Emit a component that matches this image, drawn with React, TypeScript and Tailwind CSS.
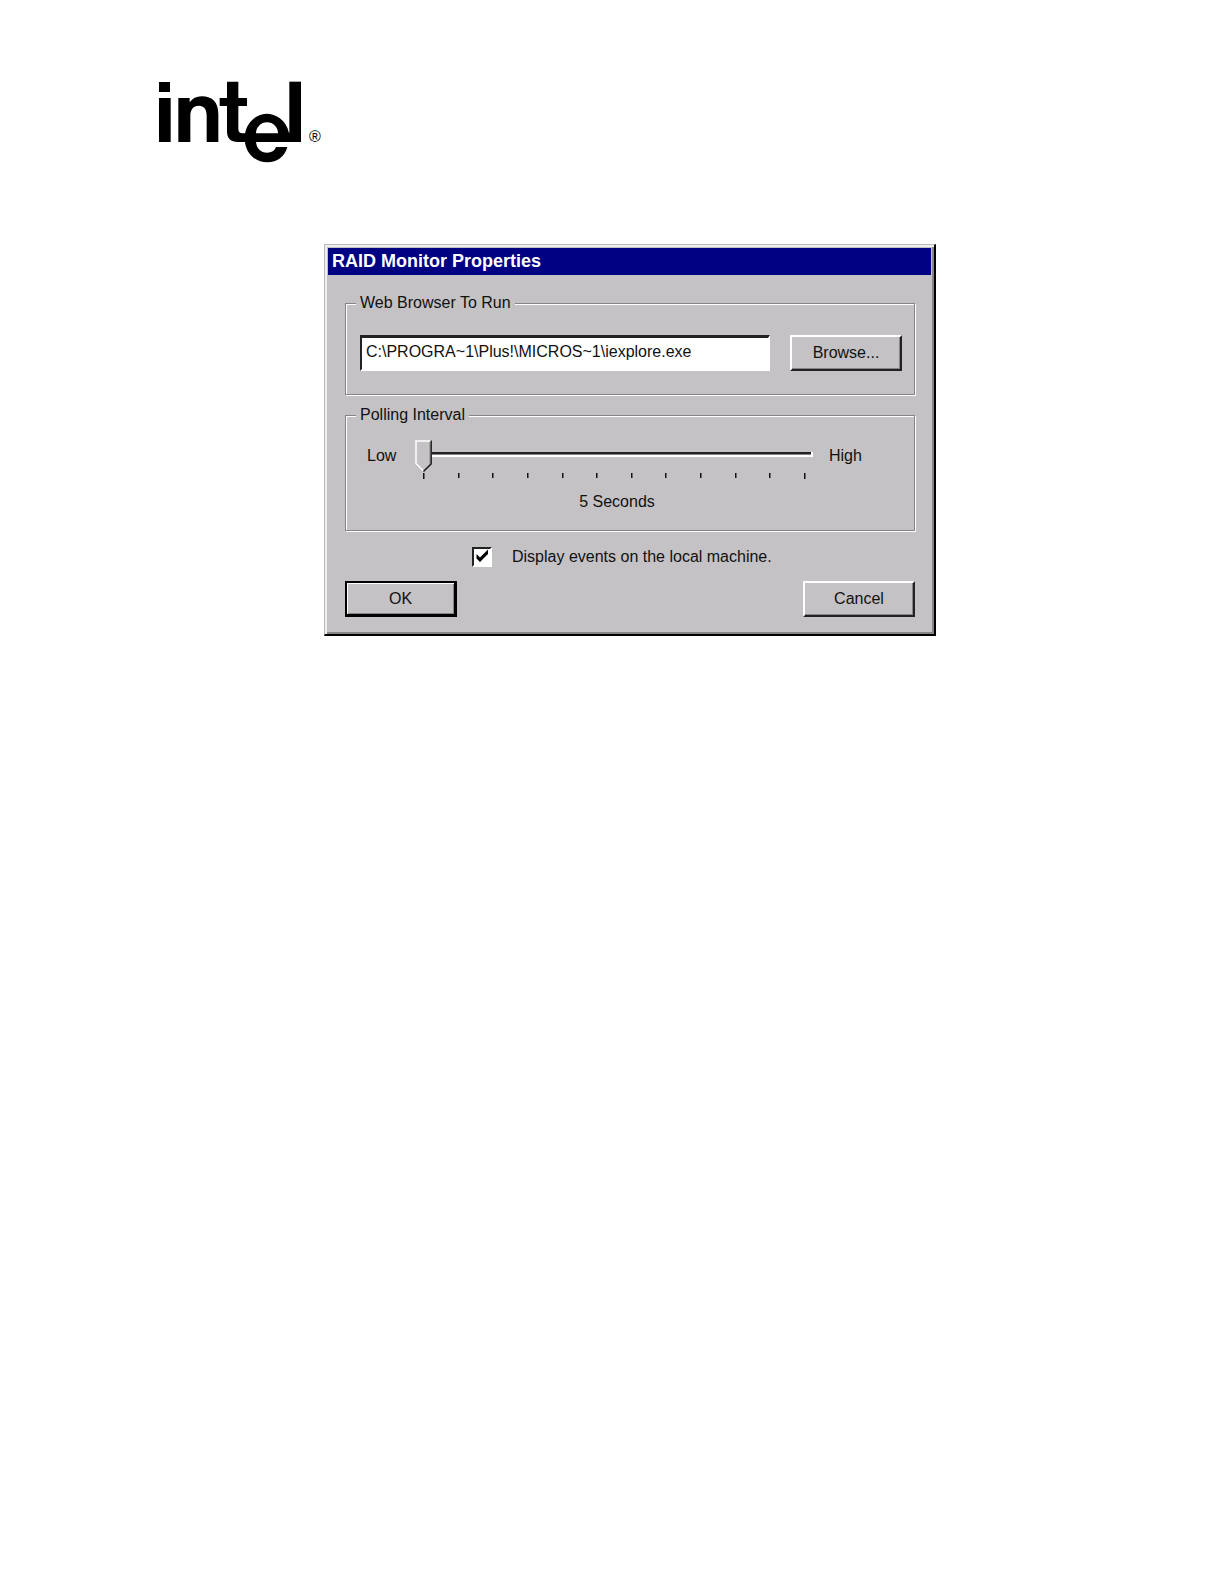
import React from 'react';

const TICKS = 12;

const IntelLogo: React.FC = () => (
    <svg viewBox="27 33 426 246" className="w-[142px] h-[82px]" role="img" aria-label="intel">
        {/* i */}
        <rect x="27" y="36" width="33" height="30" />
        <rect x="27" y="84" width="35" height="132" />
        {/* n */}
        <path d="M85 84h34v13c8-12 20-18 36-18c33 0 50 19 50 53v84h-35v-79c0-20-8-30-24-30s-25 12-25 30v79h-36z" />
        {/* t */}
        <path d="M231 35h34v49h26v24h-26v66c0 12 4 16 15 16h12l-6 26h-22c-22 0-33-10-33-32v-76h-22v-24h22z" />
        {/* e */}
        <path
            fillRule="evenodd"
            d="M284 205A67 72 0 0 1 416 186L418 190H453V216H318C320 236 332 248 352 248C364 248 374 242 378 231H412C404 260 382 277 352 277C314 277 284 248 284 205zM318 190H384A33 33 0 0 0 318 190z"
        />
        {/* l */}
        <rect x="418" y="35" width="35" height="181" />
    </svg>
);

interface GroupBoxProps {
    title: string;
    className?: string;
    children: React.ReactNode;
}

const GroupBox: React.FC<GroupBoxProps> = ({ title, className = '', children }) => (
    <fieldset
        className={`min-w-0 border border-[#868487] pr-3 pl-3.5 shadow-[1px_1px_0_#fff,inset_1px_1px_0_#fff] ${className}`}
    >
        <legend className="-ml-1 bg-[#c4c2c5] px-1 leading-5">{title}</legend>
        {children}
    </fieldset>
);

interface DialogButtonProps {
    label: string;
    isDefault?: boolean;
}

const DialogButton: React.FC<DialogButtonProps> = ({ label, isDefault }) => (
    <button
        type="button"
        className={
            isDefault
                ? 'h-9 w-28 border-2 border-r-3 border-b-3 border-black shadow-[inset_1px_1px_0_#fff,inset_-1px_-1px_0_#868487]'
                : 'h-9 w-28 border-2 border-t-white border-l-white border-r-[#222] border-b-[#222] shadow-[inset_-1px_-1px_0_#868487]'
        }
    >
        {label}
    </button>
);

const IntervalSlider: React.FC = () => {
    const [value, setValue] = React.useState(0);
    const position = 8 + (value * 381) / (TICKS - 1);

    return (
        <div className="relative h-10 w-[398px]">
            <svg viewBox="0 0 398 40" className="h-10 w-full" aria-hidden="true">
                <rect x="1" y="12" width="395" height="2" fill="#222" />
                <rect x="1" y="14" width="395" height="1" fill="#868487" />
                <rect x="1" y="15" width="397" height="2" fill="#fff" />
                <rect x="396" y="12" width="2" height="5" fill="#fff" />
                {Array.from({ length: TICKS }, (_, i) => (
                    <rect
                        key={i}
                        x={Math.round(8 + (i * 381) / (TICKS - 1))}
                        y="33"
                        width="1.5"
                        height={i === 0 || i === TICKS - 1 ? 6 : 5}
                        fill="#111"
                    />
                ))}
                <g transform={`translate(${position - 8} 0)`}>
                    <path d="M0 0h17v24l-8 8h-1l-8-8z" fill="#c4c2c5" />
                    <path d="M8.5 31L1 23.5V1h15" fill="none" stroke="#fff" strokeWidth="1.5" />
                    <path d="M15 2v22l-6.5 6.5" fill="none" stroke="#868487" />
                    <path d="M16.2 0.5v23.5L8.5 31.5" fill="none" stroke="#222" strokeWidth="1.5" />
                </g>
            </svg>
            <input
                type="range"
                min={0}
                max={TICKS - 1}
                value={value}
                onChange={(e) => setValue(Number(e.target.value))}
                className="absolute inset-0 m-0 h-full w-full opacity-0"
                aria-label="Polling Interval"
            />
        </div>
    );
};

const App: React.FC = () => {
    const [browser, setBrowser] = React.useState('C:\\PROGRA~1\\Plus!\\MICROS~1\\iexplore.exe');
    const [displayEvents, setDisplayEvents] = React.useState(true);

    return (
        <div className="min-h-screen bg-white px-[159px] pt-[81px] font-['Liberation_Sans',Arial,sans-serif] text-base text-[#111]">
            <header className="flex items-end gap-2">
                <IntelLogo />
                <span className="mb-3.5 text-base leading-6 text-black">®</span>
            </header>

            <main className="mt-[81px] ml-[165px] w-[612px] border-t border-l border-r-2 border-b-2 border-t-[#bbb] border-l-[#bbb] border-r-black border-b-black bg-[#c4c2c5] p-[3px] shadow-[inset_2px_2px_0_#eee,inset_-2px_-2px_0_#868487]">
                <h1 className="h-[27px] bg-[#000083] px-1 text-lg leading-[27px] font-bold text-white">
                    RAID Monitor Properties
                </h1>

                <form className="pt-[18px] pr-4 pb-3.5 pl-[17px]" onSubmit={(e) => e.preventDefault()}>
                    <GroupBox title="Web Browser To Run" className="h-[102px]">
                        <div className="mt-[22px] flex items-center justify-between">
                            <input
                                type="text"
                                value={browser}
                                onChange={(e) => setBrowser(e.target.value)}
                                className="h-9 w-[410px] border-2 border-t-3 border-t-[#222] border-l-[#222] border-r-white border-b-white bg-white px-1 pb-1 outline-none"
                                aria-label="Web Browser To Run"
                            />
                            <DialogButton label="Browse..." />
                        </div>
                    </GroupBox>

                    <GroupBox title="Polling Interval" className="mt-2.5 h-[126px]">
                        <div className="mt-[15px] flex items-start px-[7px]">
                            <span className="w-12 pt-1 leading-6">Low</span>
                            <IntervalSlider />
                            <span className="pt-1 pl-4 leading-6">High</span>
                        </div>
                        <p className="mt-2.5 pr-7 text-center leading-6">
                            <output>5 Seconds</output>
                        </p>
                    </GroupBox>

                    <label className="mt-4 ml-[127px] flex w-fit items-center gap-5 leading-5">
                        <span className="relative h-5 w-5">
                            <input
                                type="checkbox"
                                checked={displayEvents}
                                onChange={(e) => setDisplayEvents(e.target.checked)}
                                className="block h-5 w-5 appearance-none border-2 border-t-[#222] border-l-[#222] border-r-white border-b-white bg-white"
                            />
                            {displayEvents && (
                                <svg viewBox="0 0 20 20" className="pointer-events-none absolute inset-0" aria-hidden="true">
                                    <path d="M4.5 7v4.5l3.500 3.500l8-8v-4.500l-8 8z" />
                                </svg>
                            )}
                        </span>
                        Display events on the local machine.
                    </label>

                    <div className="mt-3.5 flex justify-between">
                        <DialogButton label="OK" isDefault />
                        <DialogButton label="Cancel" />
                    </div>
                </form>
            </main>
        </div>
    );
};

export default App;
